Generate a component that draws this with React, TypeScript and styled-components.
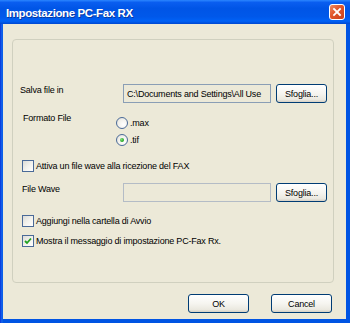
import React from 'react'
import styled, { createGlobalStyle, css } from 'styled-components'

const GlobalStyle = createGlobalStyle`
  html, body {
    margin: 0;
    padding: 0;
    background: #ffffff;
  }
  body {
    font-family: 'Liberation Sans', Arial, sans-serif;
  }
`

const Window = styled.div`
  width: 350px;
  height: 323px;
  display: flex;
  flex-direction: column;
  background: #0054e3;
  overflow: hidden;
`

const TitleBar = styled.div`
  height: 24px;
  flex: none;
  display: flex;
  align-items: center;
  justify-content: space-between;
  padding: 0 5px 0 6px;
  box-sizing: border-box;
  background: linear-gradient(
    to bottom,
    #2b86ff 0%,
    #0a5ef0 10%,
    #0055e6 35%,
    #0058ea 70%,
    #0062f6 88%,
    #0047d0 100%
  );
`

const Title = styled.span`
  font-family: 'Liberation Sans', Arial, sans-serif;
  font-weight: bold;
  font-size: 11.5px;
  letter-spacing: -0.4px;
  color: #ffffff;
  text-shadow: 1px 1px 0 #0a3aa0;
  margin-top: 1px;
`

const CloseButton = styled.div`
  width: 16px;
  height: 16px;
  box-sizing: border-box;
  border: 1px solid #ffffff;
  border-radius: 3px;
  background: linear-gradient(135deg, #ee8a62 0%, #e0552a 45%, #c8401b 100%);
  display: flex;
  align-items: center;
  justify-content: center;
`

const Frame = styled.div`
  flex: 1;
  display: flex;
  padding: 0 4px 4px 3px;
  background: linear-gradient(to right, #0831d9 0, #166aee 2px, #0054e3 3px, #0054e3 100%);
`

const Body = styled.div`
  flex: 1;
  display: flex;
  flex-direction: column;
  background: #ece9d8;
  padding: 15px 12px 0 9px;
`

const GroupBox = styled.div`
  height: 244px;
  box-sizing: border-box;
  border: 1px solid #d0d0bf;
  border-radius: 4px;
  padding: 0 6px 0 7px;
  display: flex;
  flex-direction: column;
`

const FieldRow = styled.div<{ $top: number }>`
  display: flex;
  align-items: center;
  height: 19px;
  margin-top: ${({ $top }) => $top}px;
`

const Label = styled.span<{ $indent?: number }>`
  font-size: 9px;
  letter-spacing: -0.2px;
  color: #000000;
  line-height: 14px;
  white-space: nowrap;
  padding-left: ${({ $indent }) => $indent ?? 0}px;
`

const FieldLabel = styled(Label)`
  width: 103px;
  flex: none;
  box-sizing: border-box;
  align-self: flex-start;
  margin-top: -1px;
`

const TextBox = styled.div<{ $disabled?: boolean }>`
  width: 148px;
  height: 19px;
  flex: none;
  box-sizing: border-box;
  margin-right: 5px;
  padding: 0 3px;
  display: flex;
  align-items: center;
  overflow: hidden;
  white-space: nowrap;
  font-size: 9px;
  letter-spacing: -0.2px;
  color: #000000;
  background: #ece9d8;
  ${({ $disabled }) =>
    $disabled
      ? css`
          border: 1px solid #b4bcc6;
        `
      : css`
          border: 1px solid #8a9eb5;
        `}
`

const Button = styled.button<{ $width: number }>`
  width: ${({ $width }) => $width}px;
  height: 19px;
  flex: none;
  box-sizing: border-box;
  padding: 0;
  margin: 0;
  border: 1px solid #003c74;
  border-radius: 3px;
  background: linear-gradient(to bottom, #ffffff 0%, #f6f5f0 50%, #ebe9e0 85%, #d6d0c5 100%);
  font-family: 'Liberation Sans', Arial, sans-serif;
  font-size: 9px;
  letter-spacing: -0.2px;
  color: #000000;
  cursor: default;
`

const FormatRow = styled.div`
  display: grid;
  grid-template-columns: 96px auto;
  margin-top: 8px;
`

const RadioList = styled.div`
  display: flex;
  flex-direction: column;
  gap: 3px;
  padding-top: 5px;
`

const Option = styled.div`
  display: flex;
  align-items: center;
  gap: 2px;
  height: 14px;
`

const RadioCircle = styled.span<{ $checked?: boolean }>`
  width: 12px;
  height: 12px;
  box-sizing: border-box;
  border-radius: 50%;
  border: 1px solid #4a6a98;
  background: radial-gradient(circle at 65% 65%, #ffffff 0%, #f2f1ec 55%, #d8d7cf 100%);
  display: flex;
  align-items: center;
  justify-content: center;

  &::after {
    content: '';
    display: ${({ $checked }) => ($checked ? 'block' : 'none')};
    width: 4px;
    height: 4px;
    border-radius: 50%;
    background: radial-gradient(circle at 35% 35%, #7ee07a 0%, #21a121 70%, #1a8a1a 100%);
  }
`

const CheckRow = styled.div<{ $top: number }>`
  display: flex;
  align-items: center;
  gap: 2px;
  height: 14px;
  margin-top: ${({ $top }) => $top}px;
  padding-left: 2px;
`

const CheckBox = styled.span`
  width: 12px;
  height: 12px;
  flex: none;
  box-sizing: border-box;
  border: 1px solid #4a6a98;
  background: linear-gradient(135deg, #dcdcd7 0%, #f2f1ec 50%, #ffffff 100%);
  display: flex;
  align-items: center;
  justify-content: center;
`

const Footer = styled.div`
  display: flex;
  justify-content: flex-end;
  gap: 22px;
  margin-top: 11px;
  padding-right: 2px;
`

const Check = ({ checked, label, top }: { checked?: boolean; label: string; top: number }) => (
  <CheckRow $top={top}>
    <CheckBox>
      {checked && (
        <svg width="8" height="8" viewBox="0 0 8 8">
          <path d="M1 4 L3 6 L7 1.5" fill="none" stroke="#21a121" strokeWidth="1.8" />
        </svg>
      )}
    </CheckBox>
    <Label>{label}</Label>
  </CheckRow>
)

const App = (): React.ReactElement => (
  <>
    <GlobalStyle />
    <Window>
      <TitleBar>
        <Title>Impostazione PC-Fax RX</Title>
        <CloseButton>
          <svg width="10" height="10" viewBox="0 0 10 10">
            <path d="M2 2 L8 8 M8 2 L2 8" stroke="#ffffff" strokeWidth="1.8" strokeLinecap="square" />
          </svg>
        </CloseButton>
      </TitleBar>
      <Frame>
        <Body>
          <GroupBox>
            <FieldRow $top={44}>
              <FieldLabel>Salva file in</FieldLabel>
              <TextBox>C:\Documents and Settings\All Use</TextBox>
              <Button $width={51}>Sfoglia...</Button>
            </FieldRow>
            <FormatRow>
              <Label $indent={3}>Formato File</Label>
              <RadioList>
                <Option>
                  <RadioCircle />
                  <Label>.max</Label>
                </Option>
                <Option>
                  <RadioCircle $checked />
                  <Label>.tif</Label>
                </Option>
              </RadioList>
            </FormatRow>
            <Check top={12} label="Attiva un file wave alla ricezione del FAX" />
            <FieldRow $top={10}>
              <FieldLabel $indent={2}>File Wave</FieldLabel>
              <TextBox $disabled />
              <Button $width={51}>Sfoglia...</Button>
            </FieldRow>
            <Check top={12} label="Aggiungi nella cartella di Avvio" />
            <Check top={6} checked label="Mostra il messaggio di impostazione PC-Fax Rx." />
          </GroupBox>
          <Footer>
            <Button $width={61}>OK</Button>
            <Button $width={61}>Cancel</Button>
          </Footer>
        </Body>
      </Frame>
    </Window>
  </>
)

export default App
